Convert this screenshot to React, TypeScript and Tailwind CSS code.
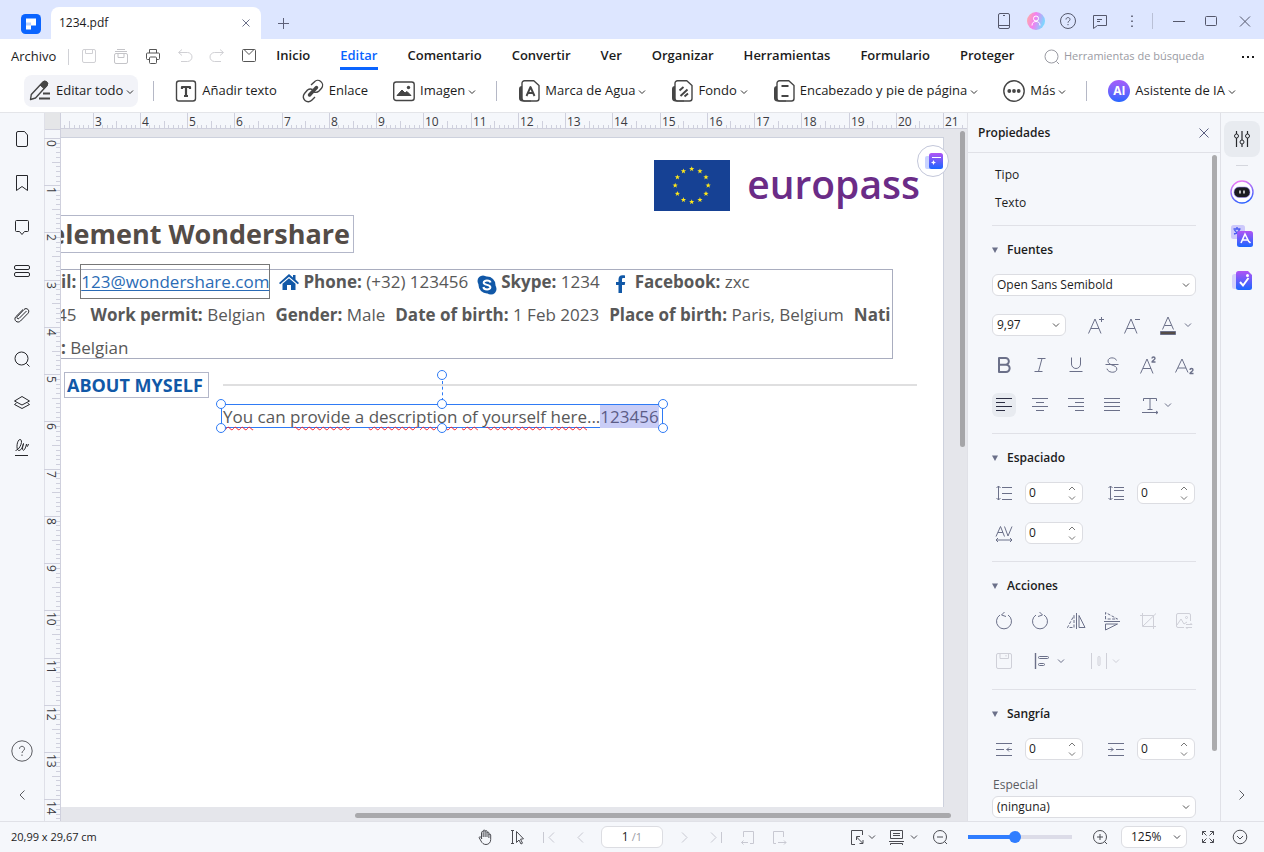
import React, { useState } from 'react';

type IconProps = { className?: string; children?: React.ReactNode };

// All line icons share a 24px grid with a hairline stroke
const Icon = ({ className = '', children }: IconProps) => (
  <svg
    viewBox="0 0 24 24"
    className={`h-6 w-6 shrink-0 ${className}`}
    fill="none"
    stroke="currentColor"
    strokeWidth={1}
    strokeLinejoin="round"
    aria-hidden="true"
  >
    {children}
  </svg>
);

const Chevron = ({ className = '' }: { className?: string }) => (
  <svg viewBox="0 0 8 8" className={`h-2 w-2 shrink-0 ${className}`} fill="none" stroke="currentColor" aria-hidden="true">
    <path d="M1 2.5l3 3 3-3" />
  </svg>
);

type IconButtonProps = { label: string; className?: string; disabled?: boolean; children: React.ReactNode };

const IconButton = ({ label, className = '', disabled, children }: IconButtonProps) => (
  <button type="button" aria-label={label} disabled={disabled} className={`flex h-6 w-6 shrink-0 items-center justify-center ${className}`}>
    {children}
  </button>
);

const SaveShape = () => (
  <>
    <rect x="5.500" y="5.500" width="13" height="13" rx="1.500" />
    <path d="M8.500 5.500v4h7v-4" />
  </>
);

/* ---------- Title bar ---------- */

const TitleBar = () => (
  <div className="flex h-[39px] shrink-0 items-end bg-[#dde6ff]">
    <div className="ml-[21px] mr-2.5 flex h-8 items-center pt-0.5">
      <svg viewBox="0 0 20 20" className="h-5 w-5" aria-label="PDFelement">
        <rect width="20" height="20" rx="4.500" fill="#0a64ff" />
        <path d="M5 4.500h10v7h-5v4H5z" fill="#fff" />
        <path d="M5 8.500h5v3H5z" fill="#b9d2ff" />
      </svg>
    </div>
    <div className="flex h-8 w-[210px] items-center justify-between rounded-t-lg bg-white pl-2 pr-2.5">
      <span className="text-[12px]">1234.pdf</span>
      <button type="button" aria-label="Cerrar pestaña" className="text-[#6b7089]">
        <svg viewBox="0 0 10 10" className="h-2.5 w-2.5" stroke="currentColor"><path d="M1.500 1.500l7 7m0-7l-7 7" /></svg>
      </button>
    </div>
    <IconButton label="Nueva pestaña" className="mb-1 ml-2.5 text-[#5d6078]">
      <Icon><path d="M12.500 7v11M7 12.500h11" /></Icon>
    </IconButton>
    <div className="mb-1.5 ml-auto flex items-center gap-2 pr-[7px] text-[#55586c]">
      <IconButton label="Dispositivo">
        <Icon><rect x="6.500" y="4.500" width="11" height="15" rx="1.500" /><path d="M6.500 16.500h11M11 6.500h2" /></Icon>
      </IconButton>
      <IconButton label="Cuenta">
        <svg viewBox="0 0 18 18" className="h-[18px] w-[18px]">
          <defs>
            <linearGradient id="avatar" x1="0" y1="0" x2="1" y2=".3">
              <stop offset="0" stopColor="#ffb49b" /><stop offset=".5" stopColor="#f57ef0" /><stop offset="1" stopColor="#7fd4ff" />
            </linearGradient>
          </defs>
          <circle cx="9" cy="9" r="9" fill="url(#avatar)" />
          <circle cx="9" cy="6.500" r="2.500" fill="none" stroke="#fff" />
          <path d="M5 13.500c0-3 2-4 4-4s4 1 4 4" fill="none" stroke="#fff" />
        </svg>
      </IconButton>
      <IconButton label="Ayuda">
        <Icon><circle cx="12" cy="12" r="7.500" /><path d="M10 10.500c0-2.600 4-2.600 4 0 0 1.500-2 1.500-2 3.200M12 15v1.200" /></Icon>
      </IconButton>
      <IconButton label="Comentarios">
        <Icon><path d="M5.500 6.500h13v10h-9l-4 3zM9 10.500h5M9 12.500h3" /></Icon>
      </IconButton>
      <IconButton label="Más opciones">
        <Icon><path d="M12 6.500v1.500M12 11.500v1.500M12 16.500v1.500" strokeWidth={1.600} /></Icon>
      </IconButton>
      <span className="h-4 w-px bg-[#b9c0d6]" />
      <IconButton label="Minimizar" className="ml-1.5"><Icon><path d="M6 12.500h12" /></Icon></IconButton>
      <IconButton label="Maximizar"><Icon><rect x="6.500" y="7.500" width="11" height="9" rx="1" /></Icon></IconButton>
      <IconButton label="Cerrar" className="ml-0.5"><Icon><path d="M7 7.500l10 10m0-10l-10 10" /></Icon></IconButton>
    </div>
  </div>
);

/* ---------- Menu ---------- */

const MENU = ['Inicio', 'Editar', 'Comentario', 'Convertir', 'Ver', 'Organizar', 'Herramientas', 'Formulario', 'Proteger'];

const MenuBar = () => (
  <div className="flex h-[35px] shrink-0 items-center bg-white pl-[11px] pr-1">
    <button type="button" className="text-[13px]">Archivo</button>
    <span className="ml-3 h-4 w-px bg-[#d0d1d6]" />
    <div className="ml-2 flex gap-2 pb-0.5 text-[#555]">
      <IconButton label="Guardar" disabled className="text-[#d0d0d4]"><Icon><SaveShape /></Icon></IconButton>
      <IconButton label="Guardar todo" disabled className="text-[#c4c4c8]">
        <Icon><rect x="5.500" y="9.500" width="13" height="10" rx="1.500" /><path d="M9 9.500v4h6v-4M6 7.500h12M8 5.500h8" /></Icon>
      </IconButton>
      <IconButton label="Imprimir">
        <Icon><path d="M8.500 9V5.500h7V9M8.500 15.500h-2a1 1 0 0 1-1-1V10a1 1 0 0 1 1-1h11a1 1 0 0 1 1 1v4.500a1 1 0 0 1-1 1h-2" /><rect x="8.500" y="13" width="7" height="6.500" rx="1" /></Icon>
      </IconButton>
      <IconButton label="Deshacer" disabled className="text-[#d0d0d4]">
        <Icon><path d="M9 5.500L5.500 8.500 9 11.500M6 8.500h8.500a4.500 4.500 0 0 1 0 9H8" /></Icon>
      </IconButton>
      <IconButton label="Rehacer" disabled className="text-[#d0d0d4]">
        <Icon><path d="M15 5.500l3.500 3-3.500 3M18 8.500H9.500a4.500 4.500 0 0 0 0 9H16" /></Icon>
      </IconButton>
      <IconButton label="Enviar por correo">
        <Icon><rect x="5.500" y="5.500" width="13" height="12" rx="1" /><path d="M7 5.500l5 5 5-5" /></Icon>
      </IconButton>
    </div>
    <nav className="ml-[15px] flex h-full gap-[30px] text-[13px] font-semibold">
      {MENU.map((name) => (
        <button
          key={name}
          type="button"
          className={name === 'Editar' ? 'h-[31px] border-b-[3px] border-[#0a64ff] pt-1.5 text-[#0a64ff]' : 'h-[31px] border-b-[3px] border-transparent pt-1.5'}
        >
          {name}
        </button>
      ))}
    </nav>
    <label className="ml-auto flex items-center text-[#9a9ba3]">
      <Icon><circle cx="11.500" cy="11.500" r="6.500" /><path d="M16.500 16.500l2.500 2.500" /></Icon>
      <input type="search" aria-label="Herramientas de búsqueda" placeholder="Herramientas de búsqueda" className="w-[162px] bg-transparent text-[11px] outline-none placeholder:text-[#9a9ba3]" />
    </label>
    <IconButton label="Más" className="ml-2.5">
      <Icon><path d="M6 12h2M11 12h2M16 12h2" strokeWidth={2} /></Icon>
    </IconButton>
  </div>
);

/* ---------- Edit toolbar ---------- */

const PageBack = ({ children }: { children: React.ReactNode }) => (
  <>
    <path d="M5 7c-2 .3-3 1-3 3v9c0 2 1 3.500 3.500 3.500H14v-1H8a3 3 0 0 1-3-3z" fill="currentColor" stroke="none" />
    <path d="M7.500 1.700h9.300l5.200 4.800v13a2.500 2.500 0 0 1-2.500 2.500h-12A2.500 2.500 0 0 1 5 19.500V4.200a2.500 2.500 0 0 1 2.500-2.500z" strokeWidth={1.400} />
    {children}
  </>
);

type ToolProps = { text: string; menu?: boolean; className?: string; children: React.ReactNode };

const Tool = ({ text, menu, className = '', children }: ToolProps) => (
  <button type="button" className={`flex shrink-0 items-center whitespace-nowrap text-[13px] ${className}`}>
    <span className="mr-1 text-[#454545]">{children}</span>
    {text}
    {menu && <Chevron className="ml-[3px] mt-0.5 text-[#333]" />}
  </button>
);

const Divider = () => <span className="-mx-1 h-5 w-px shrink-0 bg-[#b5b8c6]" />;

const Toolbar = () => (
  <div className="flex h-[39px] shrink-0 items-start gap-6 border-b border-[#e4e5e9] bg-white pl-6 pt-px">
    <Tool text="Editar todo" menu className="-mr-[5px] h-8 rounded-lg bg-[#f2f3f8] pl-1 pr-1">
      <Icon>
        <path d="M2.500 20.500l.8-5L14.500 3.500a2.600 2.600 0 0 1 4 3.500L7.500 19z" strokeWidth={1.400} />
        <path d="M12 6l3-3a2.600 2.600 0 0 1 4 3.600l-3 3z" fill="currentColor" />
        <path d="M15 14.500h7M11 19.500h11" strokeWidth={2} />
      </Icon>
    </Tool>
    <div className="flex h-8 items-center gap-6">
      <Divider />
      <Tool text="Añadir texto">
        <Icon><rect x="2.500" y="2" width="19" height="20" rx="2.500" strokeWidth={1.400} /><path d="M8 10V8h8v2M12 8v9M10 17h4" strokeWidth={2.200} /></Icon>
      </Tool>
      <Tool text="Enlace">
        <Icon>
          <path d="M10 6l3-2.800a4.800 4.800 0 0 1 7.500 6L18 12a4.800 4.800 0 0 1-5 1M14 18l-3 3a4.800 4.800 0 0 1-7.500-6.500L6.500 11a4.800 4.800 0 0 1 5-.5" strokeWidth={1.400} />
          <path d="M8.500 16l7-7.500" strokeWidth={3.400} strokeLinecap="round" />
        </Icon>
      </Tool>
      <Tool text="Imagen" menu>
        <Icon>
          <rect x="1.700" y="3" width="20.500" height="18.500" rx="2.500" strokeWidth={1.400} />
          <path d="M5 16.500l5-5.500 3 3 2-1.500 4 4z" fill="currentColor" />
          <circle cx="16.500" cy="8.500" r="1.700" fill="currentColor" stroke="none" />
        </Icon>
      </Tool>
      <Divider />
      <Tool text="Marca de Agua" menu>
        <Icon><PageBack><path d="M9.500 17l4-9 4 9M11 14h5" strokeWidth={1.900} /></PageBack></Icon>
      </Tool>
      <Tool text="Fondo" menu>
        <Icon><PageBack><path d="M9.500 11.500l4-3.500M10.500 17l7-6.500M14.500 17.500l3.500-3" strokeWidth={1.900} /></PageBack></Icon>
      </Tool>
      <Tool text="Encabezado y pie de página" menu>
        <Icon><PageBack><path d="M9.500 7h7M9.500 17h7" strokeWidth={1.900} /></PageBack></Icon>
      </Tool>
      <Tool text="Más" menu>
        <Icon>
          <circle cx="12" cy="12" r="10.200" strokeWidth={1.400} />
          <g fill="currentColor" stroke="none"><circle cx="7.300" cy="12" r="1.900" /><circle cx="12" cy="12" r="1.900" /><circle cx="16.700" cy="12" r="1.900" /></g>
        </Icon>
      </Tool>
      <Divider />
      <Tool text="Asistente de IA" menu>
        <span className="mx-px flex h-[22px] w-[22px] items-center justify-center rounded-full bg-linear-to-b from-[#a55bfa] to-[#1f66ff] text-[12px] font-bold text-white">AI</span>
      </Tool>
    </div>
  </div>
);

/* ---------- Left rail ---------- */

const LeftRail = () => (
  <aside className="flex w-11 shrink-0 flex-col items-center bg-[#f5f7fb] py-1 text-[#26272b]">
    {[
      ['Páginas', <path d="M6.500 6a1.500 1.500 0 0 1 1.500-1.500h6.500l3 3.500v10a1.500 1.500 0 0 1-1.500 1.500H8A1.500 1.500 0 0 1 6.500 18z" />],
      ['Marcadores', <path d="M6.500 4.500h11v15l-5.500-4-5.500 4z" />],
      ['Comentarios', <path d="M6.500 5.500h11a1 1 0 0 1 1 1v9a1 1 0 0 1-1 1h-3L12 19.500l-2.500-3h-3a1 1 0 0 1-1-1v-9a1 1 0 0 1 1-1z" />],
      ['Campos', <><rect x="4.500" y="6.500" width="15" height="4" rx="1.500" /><rect x="4.500" y="13.500" width="15" height="4" rx="1.500" /></>],
      ['Adjuntos', <path d="M16.500 8L9 15.500c-1 1-2.800-.6-1.800-1.800L14 6.500c2.500-2.500 6.500.8 4 3.800L10.500 18c-3 3-7.500-1-4.700-4.300L13 6.500" />],
      ['Buscar', <><circle cx="11.500" cy="11.500" r="6.500" /><path d="M16.500 16.500l3 3" /></>],
      ['Capas', <path d="M12 5.500l7.500 4.500-7.500 4L4.500 10zM6.500 12L4.500 13.500l7.500 4 7.500-4-2-1.500" />],
      ['Firmas', <path d="M5.500 15.500c5-1 8-11 4.500-11-3 0-4.500 11-1 11 2.500 0 4-5 4.500-7-1 3-1.500 6.500-.2 6.800 1.500.2 2.700-4.300 3.200-6.300.5 2 .5 4.500 2 0M5 20.500h13" />],
    ].map(([label, shape]) => (
      <button key={label as string} type="button" aria-label={label as string} className="flex h-11 w-11 items-center justify-center">
        <Icon>{shape}</Icon>
      </button>
    ))}
    <button type="button" aria-label="Ayuda" className="mt-auto flex h-11 w-11 items-center justify-center text-[#5b5c61]">
      <Icon><circle cx="12" cy="12" r="10.200" /><path d="M9.500 9.800c0-3.300 5-3.300 5 0 0 2-2.500 2-2.500 4.200M12 15.500v1.500" /></Icon>
    </button>
    <button type="button" aria-label="Contraer" className="flex h-11 w-11 items-center justify-center text-[#5b5c61]">
      <Icon><path d="M14.500 7.500l-4.500 4.500 4.500 4.500" /></Icon>
    </button>
  </aside>
);

/* ---------- Rulers ---------- */

const CM = 47.24;
const TENTHS = [0, 1, 2, 3, 4, 5, 6, 7, 8, 9];

const tickLength = (tenth: number) => (tenth === 0 ? 16 : tenth === 5 ? 8 : 4);

const TopRuler = () => {
  const origin = -110;
  return (
    <svg className="h-4 min-w-0 flex-1 border-b border-[#cfd0dd] bg-[#f5f7fb]" aria-hidden="true">
      {Array.from({ length: 20 }, (_, i) => i + 2).map((cm) => (
        <g key={cm}>
          {TENTHS.filter((t) => t === 0 || t * CM > (cm > 9 ? 170 : 90)).map((t) => (
            <rect key={t} x={Math.round(origin + (cm + t / 10) * CM)} y={16 - tickLength(t)} width="1" height={tickLength(t)} fill="#cfd0dd" />
          ))}
          {cm > 2 && <text x={Math.round(origin + cm * CM) + 2} y="13" fontSize="12" fill="#3b3b42">{cm}</text>}
        </g>
      ))}
    </svg>
  );
};

const SideRuler = () => {
  const origin = 9;
  return (
    <svg className="w-4 shrink-0 overflow-visible border-r border-[#cfd0dd] bg-[#f5f7fb]" aria-hidden="true">
      <rect x="0" y="0" width="16" height="1" fill="#cfd0dd" />
      {Array.from({ length: 15 }, (_, cm) => (
        <g key={cm}>
          {TENTHS.filter((t) => cm < 14 || t < 5).map((t) => (
            <rect key={t} x={15 - tickLength(t)} y={Math.round(origin + (cm + t / 10) * CM)} width={tickLength(t)} height="1" fill="#cfd0dd" />
          ))}
          <text transform={`translate(2 ${Math.round(origin + cm * CM) + 2}) rotate(90)`} fontSize="12" fill="#3b3b42">{cm}</text>
        </g>
      ))}
    </svg>
  );
};

/* ---------- Document ---------- */

const starPoints = (cx: number, cy: number, r: number) =>
  Array.from({ length: 10 }, (_, i) => {
    const radius = i % 2 ? r * 0.4 : r;
    const a = (i * Math.PI) / 5 - Math.PI / 2;
    return `${(cx + radius * Math.cos(a)).toFixed(2)},${(cy + radius * Math.sin(a)).toFixed(2)}`;
  }).join(' ');

const EuFlag = () => (
  <svg viewBox="0 0 76 51" className="h-[51px] w-[76px]" aria-label="EU">
    <rect width="76" height="51" fill="#164194" />
    {Array.from({ length: 12 }, (_, i) => {
      const a = (i * Math.PI) / 6;
      return <polygon key={i} points={starPoints(37.7 + 16.5 * Math.sin(a), 25.5 - 16.5 * Math.cos(a), 2.8)} fill="#ffe81a" />;
    })}
  </svg>
);

const Handle = ({ className }: { className: string }) => (
  <span className={`absolute h-2.5 w-2.5 rounded-full border border-[#2f7bf5] bg-white ${className}`} />
);

const typo = 'underline decoration-[#f5222d] decoration-wavy decoration-1 underline-offset-[3px]';

const Field = ({ name, value }: { name: string; value?: string }) => (
  <span><b>{name}</b>{value ? ` ${value}` : ''}</span>
);

const DocumentPage = () => (
  <div className="relative mb-3.5 mr-[23px] mt-2 flex-1 overflow-hidden border-r border-t border-[#cdd1dd] bg-white text-[#585858]">
    <div className="absolute right-[23px] top-[22px] flex items-center gap-[17px]">
      <EuFlag />
      <span className="-mt-1 text-[39px] font-semibold leading-[51px] text-[#6b2c87]">europass</span>
    </div>

    <div className="absolute left-0 top-[77px] flex h-[38px] w-[293px] items-center justify-end overflow-hidden whitespace-nowrap border border-l-0 border-[#b3b7c9] pr-[3px]">
      <h1 className="text-[27px] font-bold leading-9 text-[#544c47]">element Wondershare</h1>
    </div>

    <div className="absolute left-0 top-[131px] h-[90px] w-[832px] border border-l-0 border-[#a9adbf]" />
    <div className="absolute left-0 top-[127px] whitespace-nowrap text-[17px] leading-[33px]">
      <div className="flex items-center gap-[9px]">
        <span className="flex items-center gap-1">
          <b>il:</b>
          <a href="mailto:123@wondershare.com" className="-my-px border border-[#777] text-[#2a6bb5] underline underline-offset-2">123@wondershare.com</a>
        </span>
        <span className="flex items-center gap-1">
          <svg viewBox="0 0 20 16" className="h-4 w-5" fill="#1158a7" aria-hidden="true">
            <path d="M10 0l4 3.500V1h2.500v4.500L20 9l-1.200 1.300L10 2.700 1.200 10.300 0 9z" />
            <path d="M10 4.200l6.500 5.600V16H12v-5H8v5H3.500V9.800z" />
          </svg>
          <Field name="Phone:" value="(+32) 123456" />
        </span>
        <span className="flex items-center gap-1">
          <svg viewBox="0 0 20 20" className="mt-1.5 h-5 w-5" fill="#1158a7" aria-hidden="true">
            <circle cx="6" cy="6" r="5.500" /><circle cx="14" cy="14" r="5.500" /><circle cx="10" cy="10" r="8.500" />
            <path d="M13.500 7.500c-.5-2.500-6.800-2.800-6.800.2 0 2.800 6.700 1.500 6.700 4.500 0 3-6.500 3-7-.2" fill="none" stroke="#fff" strokeWidth="2" />
          </svg>
          <Field name="Skype:" value="1234" />
        </span>
        <span className="ml-1.5 flex items-center gap-2">
          <svg viewBox="0 0 12 18" className="mt-1 h-[18px] w-3" fill="#1158a7" aria-hidden="true">
            <path d="M3.500 18v-8H1V7h2.500V4.500C3.500 1.800 5 .3 7.500.3c1.500 0 2.500.2 2.500.2V3H8.500C7.200 3 7 3.700 7 4.600V7h3.200l-.5 3H7v8z" />
          </svg>
          <Field name="Facebook:" value="zxc" />
        </span>
      </div>
      <div className="-ml-1 flex gap-2.5">
        <span className="mr-1">45</span>
        <Field name="Work permit:" value="Belgian" />
        <Field name="Gender:" value="Male" />
        <Field name="Date of birth:" value="1 Feb 2023" />
        <Field name="Place of birth:" value="Paris, Belgium" />
        <Field name="Nati" />
      </div>
      <Field name=":" value="Belgian" />
    </div>

    <h2 className="absolute left-[3px] top-[234px] flex h-[26px] w-[145px] items-center whitespace-nowrap border border-[#b3b7c9] pl-0.5 text-[18px] font-bold text-[#1158a7]">ABOUT MYSELF</h2>
    <div className="absolute left-[162px] right-[26px] top-[246px] h-0.5 bg-[#dfdfe0]" />

    <div className="absolute left-[160px] top-[266px] h-6 w-[442px] border border-[#2f7bf5]">
      <p className="flex whitespace-pre pl-px text-[17px] leading-[23px]">
        <span>
          <span className={typo}>You</span> can <span className={typo}>provide</span> a <span className={typo}>description</span>{' '}
          <span className={typo}>of</span> <span className={typo}>yourself</span> <span className={typo}>here</span>...
        </span>
        <mark className="bg-[#c9cdf6] text-[#5c5c86]">123456</mark>
      </p>
      <span className="absolute -top-6 left-[220px] h-5 border-l border-dashed border-[#2f7bf5]" />
      <Handle className="-top-[35px] left-[215px]" />
      <Handle className="-left-1.5 -top-1.5" />
      <Handle className="-top-1.5 left-[215px]" />
      <Handle className="-right-1.5 -top-1.5" />
      <Handle className="-bottom-1.5 -left-1.5" />
      <Handle className="-bottom-1.5 left-[215px]" />
      <Handle className="-bottom-1.5 -right-1.5" />
    </div>
  </div>
);

const Workspace = () => (
  <main className="flex min-w-0 flex-1 flex-col border-l border-[#dfe0e8]">
    <div className="flex shrink-0">
      <span className="w-4 border-r border-[#cfd0dd] bg-[#e5e6e8]" />
      <TopRuler />
    </div>
    <div className="flex min-h-0 flex-1">
      <SideRuler />
      <div className="relative flex min-w-0 flex-1 flex-col bg-[#e5e6eb]">
        <DocumentPage />
        <button type="button" aria-label="Resumen con IA" className="absolute right-[18px] top-4 flex h-8 w-8 items-center justify-center rounded-full border border-[#c3c7da] bg-white">
          <svg viewBox="0 0 18 18" className="ml-0.5 h-[18px] w-[18px]" aria-hidden="true">
            <defs>
              <linearGradient id="violet" x1="0" y1="0" x2="0" y2="1"><stop offset="0" stopColor="#b154f5" /><stop offset="1" stopColor="#1a66ff" /></linearGradient>
            </defs>
            <rect x="0" y="4" width="9" height="13" rx="2" fill="#c9d3ff" />
            <rect x="4" y="1" width="14" height="16" rx="2.500" fill="url(#violet)" />
            <path d="M7 5.500h9" stroke="#fff" />
            <path d="M8.500 8l.8 1.700L11 10.500l-1.700.8-.8 1.700-.8-1.700L6 10.500l1.700-.8z" fill="#fff" />
          </svg>
        </button>
        <span className="absolute right-0.5 top-0.5 h-[316px] w-[5px] rounded-full bg-[#a5a5a8]" />
        <span className="absolute bottom-[3px] right-4 h-[5px] w-[596px] rounded-full bg-[#a9a9ac]" />
      </div>
    </div>
  </main>
);

/* ---------- Properties panel ---------- */

type PickerProps = { label: string; value: string; className: string; id?: string };

const Picker = ({ label, value, className, id }: PickerProps) => (
  <span className={`relative flex items-center ${className}`}>
    <select id={id} aria-label={label} defaultValue={value} className="h-[22px] w-full appearance-none rounded-md border border-[#dcdde2] bg-white pl-1 pr-5 text-[12px] leading-4">
      <option>{value}</option>
    </select>
    <Chevron className="pointer-events-none absolute right-1.5 text-[#555]" />
  </span>
);

const Spinner = ({ label, children }: { label: string; children: React.ReactNode }) => {
  const [value, setValue] = useState('0');
  return (
    <label className="flex items-center">
      <Icon>{children}</Icon>
      <span className="ml-[9px] flex h-[22px] w-[58px] items-center rounded-md border border-[#dcdde2] bg-white pl-[3px] pr-1.5">
        <input aria-label={label} value={value} onChange={(e) => setValue(e.target.value)} className="min-w-0 flex-1 text-[12px] text-[#1c1c1c] outline-none" />
        <svg viewBox="0 0 8 16" className="h-4 w-2" fill="none" stroke="#777" aria-hidden="true"><path d="M1 5l3-3 3 3M1 11.500l3 3 3-3" /></svg>
      </span>
    </label>
  );
};

const Section = ({ title, children }: { title: string; children: React.ReactNode }) => (
  <section className="border-t border-[#e0e1e7] pb-2 pt-2">
    <h3 className="flex h-[31px] items-center text-[12px] font-semibold">
      <svg viewBox="0 0 6 6" className="mr-[9px] h-1.5 w-1.5" aria-hidden="true"><path d="M0 .5h6L3 6z" fill="#6b7089" /></svg>
      {title}
    </h3>
    {children}
  </section>
);

const Row = ({ className = 'gap-3', children }: { className?: string; children: React.ReactNode }) => (
  <div className={`flex h-10 items-center text-[#6b7089] ${className}`}>{children}</div>
);

const PropertiesPanel = () => (
  <aside className="flex w-[254px] shrink-0 flex-col border-l border-r border-[#e0e1e7] bg-[#f5f7fb]">
    <div className="flex h-10 shrink-0 items-center justify-between border-b border-[#e0e1e7] pl-2.5 pr-1">
      <h2 className="text-[12px] font-semibold">Propiedades</h2>
      <IconButton label="Cerrar panel" className="text-[#5a5e80]"><Icon><path d="M7.500 7.500l9 9m0-9l-9 9" /></Icon></IconButton>
    </div>
    <div className="relative min-h-0 flex-1 overflow-hidden pl-6 pr-6">
      <span className="absolute right-[3px] top-0.5 h-[596px] w-[5px] rounded-full bg-[#ababad]" />
      <dl className="h-[72px] pl-[3px] pt-2 text-[12px] leading-7">
        <dt>Tipo</dt>
        <dd>Texto</dd>
      </dl>

      <Section title="Fuentes">
        <Row><Picker label="Fuente" value="Open Sans Semibold" className="flex-1 text-[#1c1c1c]" /></Row>
        <Row>
          <Picker label="Tamaño" value="9,97" className="mr-1.5 w-[74px] text-[#1c1c1c]" />
          <IconButton label="Aumentar"><Icon><path d="M4.500 20.500L11 6l6 14.500M7 15.500h8M17.500 4v5M15 6.500h5" /></Icon></IconButton>
          <IconButton label="Disminuir"><Icon><path d="M4.500 20.500L11 6l6 14.500M7 15.500h8M15 6.500h5" /></Icon></IconButton>
          <IconButton label="Color de texto"><Icon><path d="M6.500 16.500L12 4l5.500 12.500M8.500 12.500h7" /><rect x="4.500" y="18.500" width="15" height="3" fill="#544c47" /></Icon></IconButton>
          <Chevron className="-ml-2" />
        </Row>
        <Row>
          <IconButton label="Negrita"><Icon><path d="M7 5h6.500a3.300 3.300 0 0 1 0 6.700H7zM7 11.700h7a3.600 3.600 0 0 1 0 7.300H7z" strokeWidth={2} /></Icon></IconButton>
          <IconButton label="Cursiva"><Icon><path d="M9.500 5.500h8M6.500 18.500h8M14 5.500L10.500 18.500" /></Icon></IconButton>
          <IconButton label="Subrayado"><Icon><path d="M7.500 4.500v6.500a4.500 4.500 0 0 0 9 0V4.500M5.500 18.500h13" /></Icon></IconButton>
          <IconButton label="Tachado"><Icon><path d="M16.500 7.500C15.500 4 8 3.800 8 8c0 2 1.500 3 4 4s4.800 1.500 4.800 4c0 4.500-9 4.200-9.800-.3M5.500 11.500h13" /></Icon></IconButton>
          <IconButton label="Superíndice"><Icon><path d="M4.500 20.500L11 6l6 14.500M7 15.500h8" /><path d="M16 5.500c0-2 3-2 3 0 0 1-3 2.500-3 3.500h3.500" strokeWidth={1.400} /></Icon></IconButton>
          <IconButton label="Subíndice"><Icon><path d="M3.500 19.500L10 6l6 13.500M6 15h8" /><path d="M18 17c0-2 3-2 3 0 0 1-3 2.500-3 3.500h3.500" strokeWidth={1.400} /></Icon></IconButton>
        </Row>
        <Row>
          <IconButton label="Alinear a la izquierda" className="rounded-md bg-[#e8ebf0] text-[#2b2d42]"><Icon><path d="M4 5.500h16M4 9.500h9M4 13.500h16M4 17.500h9" /></Icon></IconButton>
          <IconButton label="Centrar"><Icon><path d="M4 5.500h16M8 9.500h8M4 13.500h16M8 17.500h8" /></Icon></IconButton>
          <IconButton label="Alinear a la derecha"><Icon><path d="M4 5.500h16M11 9.500h9M4 13.500h16M11 17.500h9" /></Icon></IconButton>
          <IconButton label="Justificar"><Icon><path d="M4 5.500h16M4 9.500h16M4 13.500h16M4 17.500h16" /></Icon></IconButton>
          <button type="button" aria-label="Dirección de texto" className="ml-0.5 flex items-center"><Icon><path d="M5.500 8V5.500h13V8M12 5.500V16M9.500 16.500h5M4 19.500h16l-2-1.500M18 21l2-1.500" /></Icon><Chevron className="ml-0.5" /></button>
        </Row>
      </Section>

      <Section title="Espaciado">
        <Row className="gap-[21px]">
          <Spinner label="Interlineado"><path d="M6.500 5v14M4.500 7l2-2 2 2M4.500 17l2 2 2-2M10 6.500h10M10 12.500h10M10 18.500h10" /></Spinner>
          <Spinner label="Espacio entre párrafos"><path d="M6.500 5v14M4.500 7l2-2 2 2M4.500 17l2 2 2-2M10 6.500h10M10 9.500h10M10 15.500h10M10 18.500h10" /></Spinner>
        </Row>
        <Row>
          <Spinner label="Espacio entre letras"><path d="M4 15.500l4.500-10 4 10M6 11.500h5M12.500 5.500l3.500 9.500 4-9.500M4 19h16M6 17l-2 2 2 2M18 17l2 2-2 2" /></Spinner>
        </Row>
      </Section>

      <Section title="Acciones">
        <Row>
          <IconButton label="Girar a la izquierda"><Icon><path d="M8 6a7.500 7.500 0 1 0 8 0M14 7.500L9.500 6l3-3" /></Icon></IconButton>
          <IconButton label="Girar a la derecha"><Icon><path d="M16 6a7.500 7.500 0 1 1-8 0M10 7.500L14.500 6l-3-3" /></Icon></IconButton>
          <IconButton label="Voltear horizontal"><Icon><path d="M12.500 4v16M15 6.500v12h6z" /><path d="M10 6.500v12H3.500z" strokeDasharray="3 1.500" /></Icon></IconButton>
          <IconButton label="Voltear vertical"><Icon><path d="M4 12.500h16M5.500 15v6l12-6z" /><path d="M5.500 10V3.500l12 6.500z" strokeDasharray="3 1.500" /></Icon></IconButton>
          <IconButton label="Recortar" disabled className="text-[#cfd0d8]"><Icon><path d="M6.500 4v13.500H20M4 6.500h13.500V20M7 17L20 4.500" /></Icon></IconButton>
          <IconButton label="Reemplazar imagen" disabled className="text-[#cfd0d8]"><Icon><path d="M12 18.500H6a1.500 1.500 0 0 1-1.500-1.500V6A1.500 1.500 0 0 1 6 4.500h11A1.500 1.500 0 0 1 18.500 6v6M5 16l4-6 3 5 3-2M14 15.500h6l-1.500-1.500M20 18.500h-6l1.500 1.500" /><circle cx="14.500" cy="8.500" r="1" /></Icon></IconButton>
        </Row>
        <Row>
          <IconButton label="Guardar" disabled className="text-[#cfd0d8]"><Icon><rect x="4.500" y="4.500" width="15" height="15" rx="1.500" /><path d="M8 4.500v5h8.500v-5M14 6v1.500" /></Icon></IconButton>
          <button type="button" aria-label="Alinear objetos" className="flex items-center"><Icon><path d="M7.500 4v16" strokeWidth={1.400} /><rect x="10.500" y="7.500" width="10" height="2" rx="1" /><rect x="10.500" y="14.500" width="6" height="2" rx="1" /></Icon><Chevron className="ml-[5px]" /></button>
          <button type="button" disabled aria-label="Distribuir objetos" className="ml-2.5 flex items-center text-[#cfd0d8]"><Icon><path d="M4.500 4v16M19.500 4v16" /><rect x="11" y="7.500" width="2" height="9" rx="1" /></Icon><Chevron className="ml-px" /></button>
        </Row>
      </Section>

      <Section title="Sangría">
        <Row className="gap-[21px]">
          <Spinner label="Sangría izquierda"><path d="M4 6.500h16M4 12.500h8M4 18.500h16M20 12.500h-5.500M17 10.500l-2 2 2 2" /></Spinner>
          <Spinner label="Sangría derecha"><path d="M4 6.500h16M12 12.500h8M4 18.500h16M4 12.500h5.500M7 10.500l2 2-2 2" /></Spinner>
        </Row>
        <label htmlFor="especial" className="block h-[27px] pl-px pt-0.5 text-[12px] leading-7 text-[#5b5c61]">Especial</label>
        <Picker id="especial" label="Especial" value="(ninguna)" className="w-full" />
      </Section>
    </div>
  </aside>
);

/* ---------- Right rail ---------- */

const RightRail = () => (
  <aside className="flex w-[43px] shrink-0 flex-col items-center bg-[#f5f7fb] pb-1 pr-0.5 pt-2">
    <button type="button" aria-label="Propiedades" className="flex h-9 w-9 items-center justify-center rounded-lg bg-[#e8ebf0] text-[#26272b]">
      <Icon>
        <path d="M6.500 4v3M6.500 11v9M12 4v9M12 17v3M17.500 4v3M17.500 11v9" strokeWidth={1.200} />
        <circle cx="6.500" cy="9" r="2" /><circle cx="12" cy="15" r="2" /><circle cx="17.500" cy="9" r="2" />
      </Icon>
    </button>
    <span className="mt-2 h-px w-3 bg-[#d5d7de]" />
    <button type="button" aria-label="Asistente de IA" className="mt-1 flex h-11 w-10 items-center justify-center">
      <svg viewBox="0 0 24 24" className="h-6 w-6" aria-hidden="true">
        <defs>
          <linearGradient id="ring" x1=".3" y1="0" x2=".6" y2="1"><stop offset="0" stopColor="#f07bf5" /><stop offset="1" stopColor="#2b62ff" /></linearGradient>
        </defs>
        <circle cx="12" cy="12" r="11" fill="#fff" stroke="url(#ring)" strokeWidth="1.400" />
        <rect x="4" y="7" width="16" height="10.500" rx="5" fill="#1b1b20" stroke="#9c8cf5" strokeWidth=".6" />
        <path d="M10 10.500v3M14 10.500v3" stroke="#fff" strokeWidth="1.400" />
      </svg>
    </button>
    <button type="button" aria-label="Traducir" className="flex h-11 w-10 items-center justify-center">
      <svg viewBox="0 0 24 24" className="h-6 w-6" aria-hidden="true">
        <rect x="1" y="1" width="14" height="14" rx="2.500" fill="#cdc9fb" />
        <path d="M3.500 5h7M7 3v2M9.500 5c-.5 2.500-3 4.500-5.500 5M4.500 6c1 2 2.500 3 5 4" stroke="#4a5cf0" strokeWidth="1.400" fill="none" />
        <rect x="7" y="7" width="16" height="16" rx="2.500" fill="url(#violet)" />
        <path d="M11 19l4-9 4 8M12.500 16h5M19 17.500l1.500 1.500" stroke="#fff" strokeWidth="1.600" fill="none" />
      </svg>
    </button>
    <button type="button" aria-label="Revisar" className="flex h-11 w-10 items-center justify-center">
      <svg viewBox="0 0 24 24" className="h-6 w-6" aria-hidden="true">
        <rect x="2" y="6" width="12" height="15" rx="2.500" fill="#d5d2fc" />
        <path d="M8.500 3H18l4 4v12.500a2.500 2.500 0 0 1-2.500 2.500h-11A2.500 2.500 0 0 1 6 19.500v-14A2.500 2.500 0 0 1 8.500 3z" fill="url(#violet)" />
        <path d="M10 14l3 3.500 5.500-7.500" stroke="#fff" strokeWidth="2" fill="none" />
        <circle cx="17.500" cy="7.500" r="1.500" fill="#fff" />
      </svg>
    </button>
    <button type="button" aria-label="Contraer" className="mt-auto flex h-11 w-10 items-center justify-center text-[#5b5c61]">
      <Icon><path d="M9.500 7.500l4.500 4.500-4.500 4.500" /></Icon>
    </button>
  </aside>
);

/* ---------- Status bar ---------- */

const StatusBar = () => {
  const [zoom, setZoom] = useState(45);
  return (
    <footer className="flex h-[31px] shrink-0 items-center border-t border-[#e0e1e7] bg-[#f5f7fb] pl-[11px] pr-3 text-[#4b4c52]">
      <span className="text-[11px] text-[#1c1c1c]">20,99 x 29,67 cm</span>
      <div className="ml-auto flex items-center gap-2">
        <IconButton label="Mano">
          <Icon><path d="M8.500 14V7.500c0-1.300 1.700-1.300 1.700 0V12M10.200 7V6c0-1.300 1.900-1.300 1.900 0v6M12.100 6.500c0-1.300 1.900-1.300 1.900 0V12M14 8c0-1.300 1.900-1.300 1.900 0v5M15.900 10c0-1.300 1.800-1.300 1.800 0v4.500c0 3-2 5-4.700 5-2.500 0-3.800-1.300-5-3.500l-1.700-3c-.5-1.200 1-1.800 1.700-.7l.8 1.200" /></Icon>
        </IconButton>
        <IconButton label="Seleccionar"><Icon><path d="M7.500 6v12M6 5.500h3M6 18.500h3M11.500 6.500v11l2.500-2.500 2 4 1.500-.8-2-4 3-.4z" /></Icon></IconButton>
        <IconButton label="Primera página" disabled className="text-[#c8c9d2]"><Icon><path d="M6.500 7v11M17 7.500l-5 5 5 5" /></Icon></IconButton>
        <IconButton label="Página anterior" disabled className="text-[#c8c9d2]"><Icon><path d="M14 7.500l-5 5 5 5" /></Icon></IconButton>
        <label className="flex h-[22px] w-[62px] items-center justify-center rounded-md border border-[#dcdde2] bg-white text-[12px]">
          <input aria-label="Página" defaultValue="1" className="w-2 text-[#1c1c1c] outline-none" />
          <span className="ml-0.5 text-[11px] text-[#9a9ba3]">/1</span>
        </label>
        <IconButton label="Página siguiente" disabled className="text-[#c8c9d2]"><Icon><path d="M11 7.500l5 5-5 5" /></Icon></IconButton>
        <IconButton label="Última página" disabled className="text-[#c8c9d2]"><Icon><path d="M8 7.500l5 5-5 5M18.500 7v11" /></Icon></IconButton>
        <IconButton label="Vista anterior" disabled className="text-[#c8c9d2]"><Icon><path d="M8.500 12V6.500h10v12H15M13 17.500H6.500M8.500 15.500l-2 2 2 2" /></Icon></IconButton>
        <IconButton label="Vista siguiente" disabled className="text-[#c8c9d2]"><Icon><path d="M9 18.500H6.500v-12h10V12M11 17.500h8M17 15.500l2 2-2 2" /></Icon></IconButton>
      </div>
      <div className="ml-[54px] flex items-center">
        <button type="button" aria-label="Ajustar página" className="flex items-center"><Icon><path d="M10 19.500H6.500v-14h11V10M11.500 12l6 6M11.500 15v-3.500H15M18 15v3.500h-3.500" /></Icon><Chevron className="-ml-px" /></button>
        <button type="button" aria-label="Modo de vista" className="ml-[9px] flex items-center"><Icon><path d="M5.500 5.500h12v8h-12zM8 8.500h7M8 10.500h7M4 16.500h15M5.500 20v-1.500h12V20" /></Icon><Chevron className="ml-px" /></button>
        <IconButton label="Alejar" className="ml-2.5"><Icon><circle cx="12" cy="12" r="6.500" /><path d="M9 12h6M16.500 16.500l2.500 2.500" /></Icon></IconButton>
        <input
          type="range"
          aria-label="Zoom"
          value={zoom}
          onChange={(e) => setZoom(Number(e.target.value))}
          style={{ backgroundImage: `linear-gradient(to right, #2f7dff ${zoom}%, #dcdce8 ${zoom}%)` }}
          className="ml-4 h-1 w-[104px] appearance-none [&::-webkit-slider-thumb]:h-3 [&::-webkit-slider-thumb]:w-3 [&::-webkit-slider-thumb]:appearance-none [&::-webkit-slider-thumb]:rounded-full [&::-webkit-slider-thumb]:bg-[#2f7dff]"
        />
        <IconButton label="Acercar" className="ml-4"><Icon><circle cx="12" cy="12" r="6.500" /><path d="M9 12h6M12 9v6M16.500 16.500l2.500 2.500" /></Icon></IconButton>
        <span className="relative ml-[9px] flex w-[66px] items-center">
          <select aria-label="Nivel de zoom" defaultValue="125%" className="h-[22px] w-full appearance-none rounded-md border border-[#dcdde2] bg-white pl-[9px] text-[12px] leading-4 text-[#1c1c1c]">
            <option>125%</option>
          </select>
          <Chevron className="pointer-events-none absolute right-1.5" />
        </span>
        <IconButton label="Pantalla completa" className="ml-[9px]"><Icon><path d="M10.500 10.500l-4-4M6.500 10V6.500H10M13.500 10.500l4-4M14 6.500h3.500V10M10.500 13.500l-4 4M6.500 14v3.500H10M13.500 13.500l4 4M17.500 14v3.500H14" /></Icon></IconButton>
        <IconButton label="Más" className="ml-2"><Icon><circle cx="12" cy="12" r="6.800" /><path d="M9 11l3 3 3-3" /></Icon></IconButton>
      </div>
    </footer>
  );
};

const App: React.FC = () => (
  <div className="flex h-screen flex-col overflow-hidden bg-white font-['Open_Sans','Noto_Sans',sans-serif] text-[#1c1c1c]">
    <TitleBar />
    <MenuBar />
    <Toolbar />
    <div className="flex min-h-0 flex-1">
      <LeftRail />
      <Workspace />
      <PropertiesPanel />
      <RightRail />
    </div>
    <StatusBar />
  </div>
);

export default App;
